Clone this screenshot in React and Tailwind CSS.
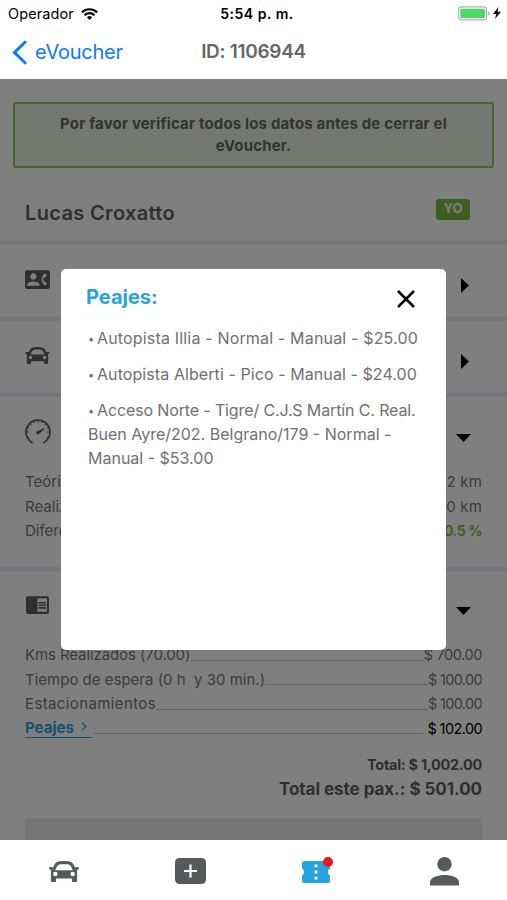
import { MdChromeReaderMode, MdContactPhone } from "react-icons/md";

const distances = [
  { label: "Teórico", value: "70.32 km" },
  { label: "Realizado", value: "70.00 km" },
];

const charges = [
  { label: "Kms Realizados (70.00)", value: "$ 700.00", tracking: "tracking-[-0.1px]", valueTracking: "tracking-[-0.4px]" },
  { label: "Tiempo de espera (0 h\u00a0 y 30 min.)", value: "$ 100.00", tracking: "tracking-normal", valueTracking: "tracking-[-0.65px]" },
  { label: "Estacionamientos", value: "$ 100.00", tracking: "tracking-[0.38px]", valueTracking: "tracking-[-0.65px]" },
];

function CarIcon({ className }) {
  return (
    <svg viewBox="0 0 30 21" className={className} fill="currentColor">
      <path
        fillRule="evenodd"
        d="M15 0C10 0 7.500.8 6 2.800L3.900 6.500C2.800 5.900 0 5.700 0 7.200c0 1.100 1 1.600 2.300 1.600C1.700 10 1.900 12 1.900 13.500V19.400c0 1 .5 1.600 1.600 1.600h2c1.100 0 1.600-.6 1.600-1.600V17.600h15.800v1.800c0 1 .5 1.600 1.600 1.600h2c1.100 0 1.600-.6 1.600-1.600V13.500c0-1.500.2-3.500-.4-4.700C29 8.800 30 8.300 30 7.200c0-1.500-2.800-1.300-3.900-.7L24 2.800C22.500.8 20 0 15 0Zm0 3.200c4 0 5.500.3 6.600 1.900C22.500 6.400 23.200 7.600 23.600 9.300H6.400C6.800 7.600 7.500 6.400 8.400 5.100 9.500 3.500 11 3.200 15 3.200ZM6.300 10.800a2.200 2.200 0 1 1 0 4.400 2.200 2.200 0 0 1 0-4.400Zm17.400 0a2.200 2.200 0 1 1 0 4.400 2.200 2.200 0 0 1 0-4.400Z"
      />
    </svg>
  );
}

function GaugeIcon() {
  return (
    <svg viewBox="0 0 26 26" className="mb-1 h-[26px] w-[26px]" fill="none" stroke="currentColor" strokeWidth="1.7" strokeLinecap="round">
      <path d="M7 23.500A12 12 0 1 1 19 23.500" />
      <path d="M13 1.500v2M4.900 4.900l1.300 1.300M1.500 13h2M22.500 13h2M21.100 4.900l-1.300 1.300M8.300 2l.6 1.600M17.700 2l-.6 1.600M2 8.300l1.600.6M24 8.300l-1.600.6M2.800 19l1.300-.8M23.200 19l-1.300-.8" strokeWidth="1" />
      <path d="M11.500 13.200l7.500-3.500-6 5.200Z" fill="currentColor" strokeWidth="1.2" />
    </svg>
  );
}

function TicketIcon() {
  return (
    <svg viewBox="0 0 28 22" className="h-[22px] w-7">
      <path fill="#27a4de" d="M2.500 0h23A2.500 2.500 0 0 1 28 2.500v5a3.900 3.900 0 0 0 0 7v5a2.500 2.500 0 0 1-2.500 2.500h-23A2.500 2.500 0 0 1 0 19.500v-5a3.900 3.900 0 0 0 0-7v-5A2.500 2.500 0 0 1 2.500 0Z" />
      <path fill="#fff" d="M12.600 3.500h2.800v2.800h-2.800ZM12.600 9.600h2.800v2.800h-2.800ZM12.600 15.700h2.800v2.800h-2.800Z" />
    </svg>
  );
}

function CaretRight() {
  return (
    <svg viewBox="0 0 8 15" className="mt-2 mr-[13px] h-[15px] w-2">
      <path d="M0 0l8 7.500L0 15Z" />
    </svg>
  );
}

function CaretDown() {
  return (
    <svg viewBox="0 0 15 8" className="mt-2 mr-[11px] h-2 w-[15px]">
      <path d="M0 0h15L7.500 8Z" />
    </svg>
  );
}

function StatusBar() {
  return (
    <div className="flex h-7 items-center text-black">
      <div className="flex flex-1 items-center gap-[7px] pb-px pl-2">
        <span className="text-[14.5px] tracking-[0.1px]">Operador</span>
        <svg viewBox="0 0 17 12" className="h-3 w-[17px]" fill="none" stroke="currentColor" strokeWidth="2.2">
          <path d="M.8 4.400a11 11 0 0 1 15.400 0M3.500 7.200a7.100 7.100 0 0 1 10 0" />
          <path d="M8.500 12L5.900 9.300a3.700 3.700 0 0 1 5.200 0Z" fill="currentColor" stroke="none" />
        </svg>
      </div>
      <span className="pb-px pl-[5px] text-[14px] font-semibold tracking-[0.5px]">5:54 p. m.</span>
      <div className="flex flex-1 items-center justify-end gap-[3px] pr-[6px] pb-[2px]">
        <svg viewBox="0 0 32 15" className="h-[15px] w-8">
          <rect x=".6" y=".9" width="28" height="13" rx="3" fill="#fff" stroke="#b0b0b0" strokeWidth="1.200" />
          <rect x="2.300" y="2.800" width="24.600" height="9.200" rx="1" fill="#4cd964" />
          <path d="M30 5.500c2 .6 2 3.400 0 4Z" fill="#b0b0b0" />
        </svg>
        <svg viewBox="0 0 8 12" className="h-3 w-2">
          <path d="M5.500 0L0 7h3.300L2 12l6-7.300H4.500Z" />
        </svg>
      </div>
    </div>
  );
}

function NavBar() {
  return (
    <div className="grid h-[51px] grid-cols-[1fr_auto_1fr] items-center pb-[3px]">
      <div className="flex items-center gap-2 pl-3 text-[#0a7aff]">
        <svg viewBox="0 0 15 25" className="h-[25px] w-[15px]" fill="none" stroke="currentColor" strokeWidth="3">
          <path d="M14 1.200L2.500 12.500 14 23.800" />
        </svg>
        <span className="text-[20px] tracking-[-0.25px]">eVoucher</span>
      </div>
      <h1 className="text-[19px] font-semibold tracking-[-0.3px] text-[#666]">ID: 1106944</h1>
    </div>
  );
}

function Voucher() {
  return (
    <div className="flex flex-col text-[#777]">
      <div className="mx-[13px] mt-[23px] flex h-[66px] items-center justify-center rounded-[2px] border-2 border-[#8dc862] bg-[#e9f0e2] px-10 text-center text-[15px] leading-[22px] font-bold tracking-[0.16px] text-[#666]">
        Por favor verificar todos los datos antes de cerrar el eVoucher.
      </div>

      <div className="flex h-[77px] items-center justify-between border-b-4 border-[#e7ebf0] pt-4 pr-[37px] pl-[25px]">
        <span className="text-[20px] font-semibold tracking-[0.35px] text-[#5e5e5e]">Lucas Croxatto</span>
        <span className="mb-[7px] flex h-[21px] w-[34px] items-center justify-center rounded-[3px] bg-[#7ac142] pb-px text-[13px] font-bold text-white">YO</span>
      </div>

      <div className="flex h-[76px] items-center justify-between border-b-4 border-[#e7ebf0] px-[25px] text-[#5e5e5e]">
        <MdContactPhone size={25} className="mb-1" />
        <div className="text-black"><CaretRight /></div>
      </div>

      <div className="flex h-[76px] items-center justify-between border-b-4 border-[#e7ebf0] px-[25px] text-[#5e5e5e]">
        <CarIcon className="mb-1 h-[17px] w-[25px]" />
        <div className="text-black"><CaretRight /></div>
      </div>

      <div className="flex h-[174px] flex-col border-b-4 border-[#e7ebf0] px-[25px] text-[15px] leading-[24.500px]">
        <div className="flex h-[73px] items-center justify-between text-[#5e5e5e]">
          <GaugeIcon />
          <CaretDown />
        </div>
        {distances.map((d) => (
          <div key={d.label} className="flex justify-between">
            <span>{d.label}</span>
            <span className="tracking-[0.2px]">{d.value}</span>
          </div>
        ))}
        <div className="flex justify-between">
          <span>Diferencia</span>
          <span className="text-[14px] font-bold tracking-[-0.4px] text-[#7ac142]">0.5 %</span>
        </div>
      </div>

      <div className="flex flex-col px-[25px] text-[15px] leading-[24.500px]">
        <div className="flex h-[72px] items-center justify-between text-[#5e5e5e]">
          <MdChromeReaderMode size={25} className="mb-[6px]" />
          <CaretDown />
        </div>
        {charges.map((c) => (
          <div key={c.label} className="flex">
            <span className={c.tracking}>{c.label}</span>
            <span className="mb-[7px] flex-1 border-b border-[#c4c4c4]" />
            <span className={`text-[14.5px] ${c.valueTracking}`}>{c.value}</span>
          </div>
        ))}
        <div className="flex">
          <span className="mt-[3px] flex h-[18px] items-center gap-[7px] border-b-[1.5px] border-[#27a4de] pr-[5px] leading-[18px] font-bold text-[#27a4de]">
            Peajes
            <svg viewBox="0 0 6 10" className="mb-[3px] h-[9px] w-[6px]" fill="none" stroke="currentColor" strokeWidth="1.500">
              <path d="M1 .8L5 5 1 9.200" />
            </svg>
          </span>
          <span className="mr-1 mb-[7px] ml-[2px] flex-1 border-b border-[#c4c4c4]" />
          <span className="text-[14.5px] tracking-[-0.6px] text-black">$ 102.00</span>
        </div>
        <div className="mt-3 text-right text-[14.500px] font-bold tracking-[-0.28px] text-[#5e5e5e]">Total: $ 1,002.00</div>
        <div className="-mt-px text-right text-[17px] font-bold tracking-[-0.04px] text-[#5e5e5e]">Total este pax.: $ 501.00</div>
        <div className="mt-[17px] h-[60px] bg-[#ececec]" />
      </div>
    </div>
  );
}

function Bullet() {
  return <span className="inline-block w-[9px] align-[1px] text-[11px] leading-none tracking-normal">•</span>;
}

function TollsDialog() {
  return (
    <div className="h-[381px] w-[385px] rounded-[5px] bg-white px-[25px] text-[#707070]">
      <div className="flex h-[57px] items-center justify-between pb-px">
        <h2 className="text-[20px] font-bold text-[#27a4de]">Peajes:</h2>
        <svg viewBox="0 0 18 18" className="mt-[3px] mr-[6px] h-[18px] w-[18px]" fill="none" stroke="#000" strokeWidth="2.500">
          <path d="M1 1l16 16M17 1L1 17" />
        </svg>
      </div>
      <ul className="ml-[2px] flex w-[345px] flex-col gap-3 text-[16px] leading-6">
        <li className="tracking-[0.17px]"><Bullet />Autopista Illia - Normal - Manual - $25.00</li>
        <li className="tracking-[0.08px]"><Bullet />Autopista Alberti - Pico - Manual - $24.00</li>
        <li>
          <Bullet />
          <span className="tracking-[-0.13px]">Acceso Norte - Tigre/ C.J.S Martín C. Real.</span><br />
          Buen Ayre/202. Belgrano/179 - Normal -<br />
          Manual - $53.00
        </li>
      </ul>
    </div>
  );
}

function TabBar() {
  return (
    <div className="grid h-[60px] grid-cols-4 items-center justify-items-center bg-white text-[#58595b]">
      <CarIcon className="mt-[2px] ml-[2px] h-[21px] w-[30px]" />
      <svg viewBox="0 0 31 26" className="mt-[2px] ml-px h-[26px] w-[31px]">
        <rect width="31" height="26" rx="4.500" fill="currentColor" />
        <path d="M15.500 6.500v13M9 13h13" stroke="#fff" strokeWidth="2.200" />
      </svg>
      <div className="relative mt-[3px] mr-[2px]">
        <TicketIcon />
        <span className="absolute -top-[4px] -right-[3px] h-[10px] w-[10px] rounded-full bg-[#e31b23]" />
      </div>
      <svg viewBox="0 0 29 29" className="mt-[2px] ml-px h-[29px] w-[29px]" fill="currentColor">
        <circle cx="14.500" cy="7.200" r="7.200" />
        <path d="M0 28.500V25c0-4.500 8-7 14.500-7S29 20.500 29 25v3.500Z" />
      </svg>
    </div>
  );
}

export default function App() {
  return (
    <div className="flex h-[900px] w-[507px] flex-col overflow-hidden bg-white font-['Inter',sans-serif]">
      <StatusBar />
      <NavBar />
      <main className="relative h-[761px] overflow-hidden">
        <Voucher />
        <div className="absolute inset-0 flex items-start justify-center bg-black/50 pt-[190px]">
          <TollsDialog />
        </div>
      </main>
      <TabBar />
    </div>
  );
}
